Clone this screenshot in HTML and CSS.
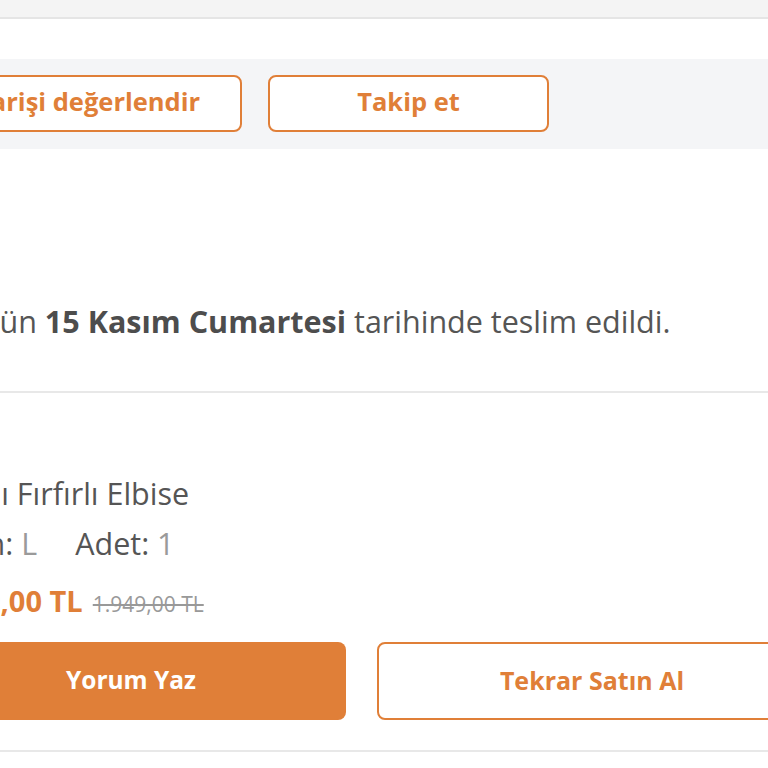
FILE: index.html
```html
<!DOCTYPE html>
<html lang="tr">
<head>
<meta charset="utf-8">
<title>Sipariş Detayı</title>
<link rel="stylesheet" href="styles.css">
</head>
<body>
<div class="page">
  <div class="topbar"></div>
  <div class="gap-white"></div>
  <div class="actions">
    <button class="btn-outline btn-rate">Siparişi değerlendir</button>
    <button class="btn-outline btn-follow">Takip et</button>
  </div>
  <div class="delivery">
    <p class="delivery-text">Bu ürün <strong>15 Kasım Cumartesi</strong> tarihinde teslim edildi.</p>
  </div>
  <div class="product">
    <div class="product-info">
      <div class="product-name">Kadın Volanlı Fırfırlı Elbise</div>
      <div class="product-attrs">
        <span class="attr"><span class="attr-label">Beden:</span> <span class="attr-value">L</span></span>
        <span class="attr"><span class="attr-label">Adet:</span> <span class="attr-value">1</span></span>
      </div>
      <div class="product-price">
        <span class="price-now">1.299,00 TL</span>
        <span class="price-old">1.949,00 TL</span>
      </div>
    </div>
    <div class="product-buttons">
      <button class="btn-solid">Yorum Yaz</button>
      <button class="btn-outline btn-rebuy">Tekrar Satın Al</button>
    </div>
  </div>
</div>
</body>
</html>
```

FILE: styles.css
```css
* { box-sizing: border-box; }
html, body { margin: 0; padding: 0; background: #fff; overflow: hidden; }
body { font-family: "Open Sans", "Noto Sans", sans-serif; color: #555; }

.page { width: 900px; margin-left: -84px; }

.topbar { height: 19px; background: #f4f4f4; border-bottom: 2px solid #e5e5e5; }
.gap-white { height: 40px; background: #fff; }

.actions {
  background: #f4f5f7;
  padding: 16px 0 17px 0;
  display: flex;
  gap: 26px;
}
button {
  font-family: inherit;
  font-weight: 700;
  cursor: pointer;
  border-radius: 8px;
  padding: 0;
}
.btn-outline {
  background: #fff;
  border: 2px solid #e07f38;
  color: #e07f38;
}
.btn-rate, .btn-follow { height: 57px; font-size: 25.5px; padding-bottom: 5px; }
.btn-rate { width: 331px; margin-left: -5px; }
.btn-follow { width: 281px; }

.delivery {
  padding: 154px 0 52px 84px;
  border-bottom: 2px solid #e8e8e8;
}
.delivery-text {
  margin: 0 0 0 -78px;
  font-size: 30.5px;
  line-height: 36px;
  color: #555;
  white-space: nowrap;
}
.delivery-text strong { font-weight: 700; color: #4d4d4d; }

.product {
  padding: 83px 0 30px 0;
  border-bottom: 2px solid #e8e8e8;
}
.product-name {
  margin-left: -91px;
  font-size: 30.5px;
  line-height: 34px;
  color: #555;
  white-space: nowrap;
}
.product-attrs {
  margin-top: 16px;
  margin-left: -2px;
  font-size: 30.5px;
  line-height: 34px;
  display: flex;
  gap: 38px;
  white-space: nowrap;
}
.attr-label { color: #555; }
.attr-value { color: #9a9a9a; }
.product-price {
  margin-top: 24px;
  margin-left: 10px;
  line-height: 34px;
  display: flex;
  align-items: baseline;
  gap: 10px;
  white-space: nowrap;
}
.price-now { font-size: 29px; font-weight: 700; color: #e07f38; }
.price-old { font-size: 21px; color: #999; text-decoration: line-through; }

.product-buttons {
  margin-top: 21px;
  display: flex;
  gap: 31px;
}
.btn-solid {
  width: 430px;
  height: 78px;
  background: #e07f38;
  border: 0;
  color: #fff;
  font-size: 24.5px;
  padding-bottom: 4px;
}
.btn-rebuy { width: 430px; height: 78px; font-size: 25px; padding-bottom: 2px; }
```
